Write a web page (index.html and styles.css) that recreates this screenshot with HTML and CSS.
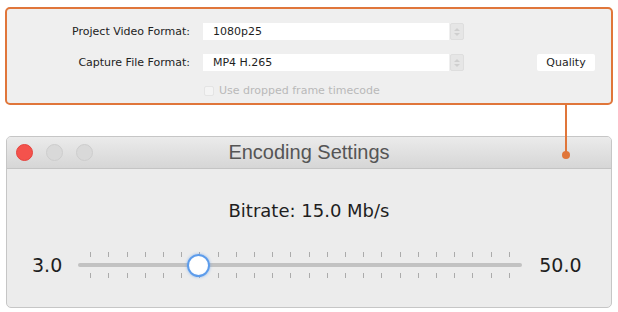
FILE: index.html
```html
<!DOCTYPE html>
<html lang="en">
<head>
  <meta charset="UTF-8" />
  <meta name="viewport" content="width=device-width, initial-scale=1.0" />
  <title>Encoding Settings</title>
  <link rel="stylesheet" href="styles.css">
</head>
<body>
  <div class="stage">
    <!-- Capture settings panel (highlighted) -->
    <div class="panel">
      <div class="form">
        <div class="label">Project Video Format:</div>
        <div class="select">
          <span class="select-value">1080p25</span>
          <span class="stepper"><i class="up"></i><i class="down"></i></span>
        </div>
        <div></div>

        <div class="label">Capture File Format:</div>
        <div class="select">
          <span class="select-value">MP4 H.265</span>
          <span class="stepper"><i class="up"></i><i class="down"></i></span>
        </div>
        <button class="quality-btn">Quality</button>

        <div></div>
        <label class="check disabled">
          <span class="box"></span>
          Use dropped frame timecode
        </label>
        <div></div>
      </div>
    </div>

    <!-- Callout line from panel to the window -->
    <div class="callout"></div>
    <div class="callout-dot"></div>

    <!-- Encoding settings window -->
    <div class="window">
      <div class="titlebar">
        <div class="lights">
          <span class="light close"></span>
          <span class="light"></span>
          <span class="light"></span>
        </div>
        <div class="title">Encoding Settings</div>
      </div>
      <div class="window-body">
        <div class="bitrate">Bitrate: 15.0 Mb/s</div>
        <div class="slider-row">
          <span class="slider-val">3.0</span>
          <div class="slider">
            <div class="ticks" id="ticksTop"></div>
            <div class="track"></div>
            <div class="ticks" id="ticksBottom"></div>
            <div class="thumb" style="left: 120px;"></div>
          </div>
          <span class="slider-val">50.0</span>
        </div>
      </div>
    </div>
  </div>
  <script>
    // 24 tick marks above and below the track
    ['ticksTop', 'ticksBottom'].forEach(function (id) {
      const row = document.getElementById(id);
      for (let i = 0; i < 24; i++) {
        const t = document.createElement('span');
        t.className = 'tick';
        row.appendChild(t);
      }
    });
  </script>
</body>
</html>
```

FILE: styles.css
```css
:root {
  --orange: #e0763a;
  --panel: #efefef;
  --text: #222;
}
* {
  margin: 0;
  padding: 0;
  box-sizing: border-box;
}
html, body {
  height: 100%;
}
body {
  background: #ffffff;
  font-family: 'DejaVu Sans', 'Noto Sans', sans-serif;
  color: var(--text);
  overflow: hidden;
}
.stage {
  position: relative;
  padding-top: 7px;
}
/* Top panel */
.panel {
  margin: 0 5px;
  height: 98px;
  border: 2px solid var(--orange);
  border-radius: 5px;
  background: var(--panel);
  padding-top: 14px;
}
.form {
  display: grid;
  grid-template-columns: 183px 261px 1fr;
  column-gap: 13px;
  row-gap: 14px;
  align-items: center;
}
.label {
  text-align: right;
  font-size: 11px;
  color: #222;
}
.select {
  display: flex;
  height: 17px;
}
.select-value {
  flex: 1;
  background: #fff;
  font-size: 11px;
  color: #1e1e1e;
  padding-left: 10px;
  line-height: 17px;
}
.stepper {
  width: 14px;
  margin-left: 1px;
  background: #e6e6e6;
  border: 1px solid #dedede;
  border-radius: 2px;
  display: flex;
  flex-direction: column;
  align-items: center;
  justify-content: center;
  gap: 2px;
}
.stepper i {
  width: 0;
  height: 0;
  border-left: 3px solid transparent;
  border-right: 3px solid transparent;
}
.stepper .up {
  border-bottom: 3px solid #cfcfcf;
}
.stepper .down {
  border-top: 3px solid #cfcfcf;
}
.quality-btn {
  justify-self: end;
  margin-right: 16px;
  width: 58px;
  height: 17px;
  border: none;
  border-radius: 2px;
  background: #fff;
  font-family: inherit;
  font-size: 11px;
  color: #1e1e1e;
}
.check {
  display: flex;
  align-items: center;
  gap: 5px;
  font-size: 11px;
  margin-top: -1px;
}
.check.disabled {
  color: #b9b9b9;
}
.check .box {
  width: 10px;
  height: 10px;
  border: 1px solid #e4e4e4;
  border-radius: 2px;
  background: #f4f4f4;
  margin-left: 1px;
}
/* Callout */
.callout {
  position: absolute;
  left: 565px;
  top: 105px;
  width: 2px;
  height: 49px;
  background: var(--orange);
  z-index: 5;
}
.callout-dot {
  position: absolute;
  left: 562px;
  top: 151px;
  width: 8px;
  height: 8px;
  border-radius: 50%;
  background: var(--orange);
  z-index: 5;
}
/* Window */
.window {
  margin: 31px 6px 0;
  height: 172px;
  border: 1px solid #c6c6c6;
  border-radius: 5px;
  background: #ececec;
  overflow: hidden;
}
.titlebar {
  position: relative;
  height: 32px;
  background: linear-gradient(#ebebeb, #d6d6d6);
  border-bottom: 1px solid #c4c4c4;
  display: flex;
  align-items: center;
  justify-content: center;
}
.lights {
  position: absolute;
  left: 9px;
  top: 7px;
  display: flex;
  gap: 13px;
}
.light {
  width: 17px;
  height: 17px;
  border-radius: 50%;
  background: #d9d9d9;
  border: 1px solid #cdcdcd;
}
.light.close {
  background: #f4524c;
  border-color: #e4433d;
}
.title {
  font-family: 'Liberation Sans', Arial, sans-serif;
  font-size: 20px;
  color: #555;
}
.window-body {
  padding-top: 31px;
}
.bitrate {
  text-align: center;
  font-size: 18px;
  line-height: 22px;
  color: #1e1e1e;
}
.slider-row {
  display: flex;
  align-items: center;
  margin-top: 30px;
  padding-left: 25px;
}
.slider-val {
  font-size: 19px;
  color: #1e1e1e;
}
.slider {
  position: relative;
  width: 444px;
  margin: 0 17px 0 16px;
  display: flex;
  flex-direction: column;
  gap: 6px;
}
.ticks {
  display: flex;
  justify-content: space-between;
  padding: 0 12px;
  height: 5px;
}
.tick {
  width: 1px;
  height: 5px;
  background: #ababab;
}
.track {
  height: 4px;
  border-radius: 2px;
  background: #c2c2c2;
}
.thumb {
  position: absolute;
  top: 2px;
  width: 23px;
  height: 23px;
  margin-left: -11px;
  border-radius: 50%;
  background: radial-gradient(circle at 50% 45%, #ffffff 55%, #eef5ff);
  border: 2px solid #5d9ceb;
  box-shadow: 0 0 3px rgba(80, 150, 240, 0.6);
}
```
